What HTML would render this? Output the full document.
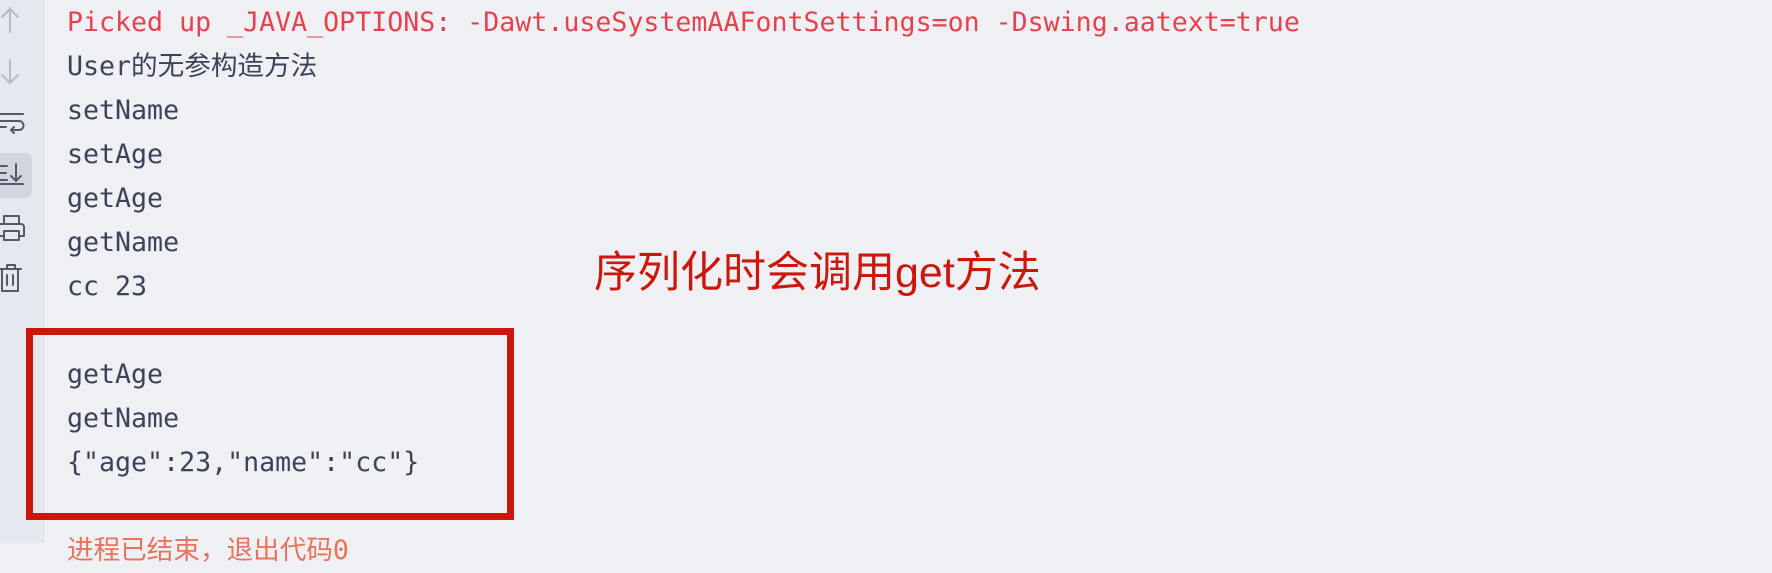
<!DOCTYPE html>
<html><head><meta charset="utf-8"><style>
html,body{margin:0;padding:0;width:1772px;height:543px;overflow:hidden;background:#eff0f4;}
.side{position:absolute;left:0;top:0;width:43px;height:543px;background:#e6e8ef;border-right:1px solid #dcdfe7;}
.hl{position:absolute;left:0;top:153px;width:32px;height:45px;background:#d3d6df;border-radius:0 7px 7px 0;}
.out{position:absolute;left:67px;top:1px;font-family:"DejaVu Sans Mono","Liberation Mono","Noto Sans CJK SC",monospace;font-size:26.6px;line-height:44px;color:#3d4258;white-space:pre;}
.r{color:#e5424f;}
.o{color:#e8735a;}
.box{position:absolute;left:26px;top:328px;width:474px;height:178px;border:7px solid #cc170d;}
.ann{position:absolute;left:594px;top:246px;font-family:"Liberation Sans","Noto Sans CJK SC",sans-serif;font-size:43px;line-height:54px;color:#cc170d;}
</style></head><body>
<div class="side">
<div class="hl"></div>
<svg width="43" height="543" style="position:absolute;left:0;top:0" fill="none" stroke-linecap="round" stroke-linejoin="round">
<g stroke="#b8bbc4" stroke-width="2"><path d="M10 8V32M2 17L10 9L18 17"/><path d="M10 60V83M2 75L10 83L18 75"/></g>
<g stroke="#555a6a" stroke-width="2">
<path d="M0 114H23M0 127H6"/><path d="M14 133L11 130L14 127M11 130H19A4 4 0 0 0 19 121H0"/>
<path d="M0 166H7M0 173H6M0 180H7M0 184H23M16 164V181M11 176L16 181L21 176"/>
<path d="M4 224V216H19V224M0 224H21A3 3 0 0 1 24 227V236H19M4 236H0M4 231H19V240H4Z"/>
<path d="M0 269H21M7 269V265H15V269M2 269V291H18V269M7 275V285M13 275V285"/>
</g></svg>
</div>
<div class="out"><span class="r">Picked up _JAVA_OPTIONS: -Dawt.useSystemAAFontSettings=on -Dswing.aatext=true</span>
User的无参构造方法
setName
setAge
getAge
getName
cc 23

getAge
getName
{"age":23,"name":"cc"}

<span class="o">进程已结束，退出代码0</span></div>
<div class="box"></div>
<div class="ann">序列化时会调用get方法</div>
</body></html>
